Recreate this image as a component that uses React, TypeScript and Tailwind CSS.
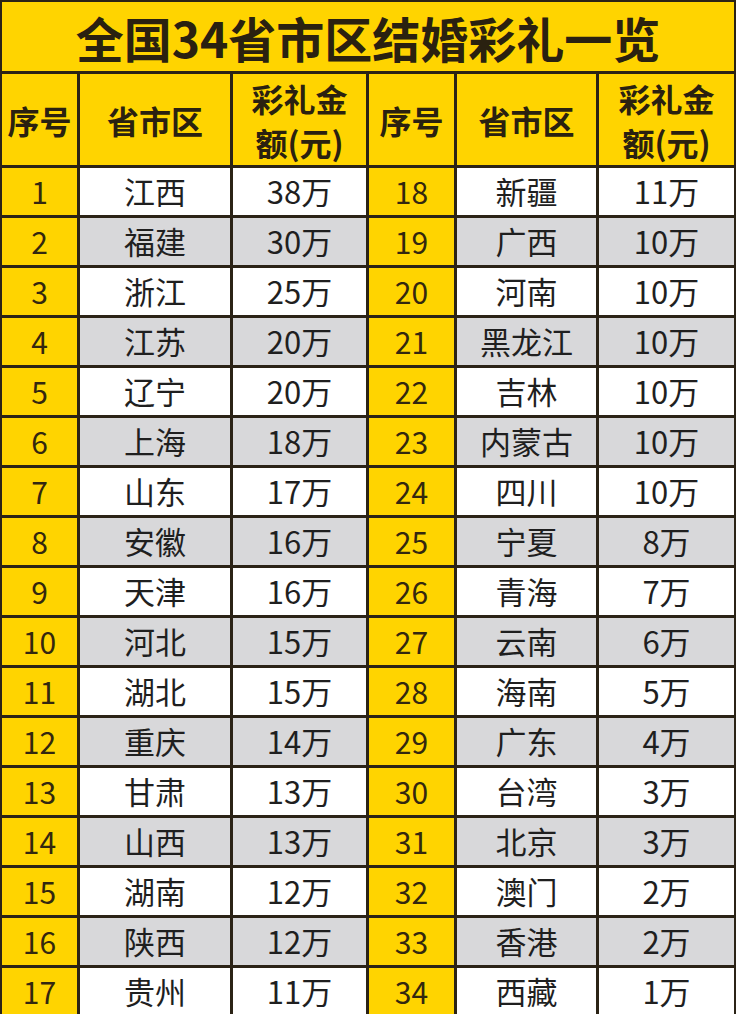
const left: [string, string][] = [
  ["江西", "38万"],
  ["福建", "30万"],
  ["浙江", "25万"],
  ["江苏", "20万"],
  ["辽宁", "20万"],
  ["上海", "18万"],
  ["山东", "17万"],
  ["安徽", "16万"],
  ["天津", "16万"],
  ["河北", "15万"],
  ["湖北", "15万"],
  ["重庆", "14万"],
  ["甘肃", "13万"],
  ["山西", "13万"],
  ["湖南", "12万"],
  ["陕西", "12万"],
  ["贵州", "11万"],
];

const right: [string, string][] = [
  ["新疆", "11万"],
  ["广西", "10万"],
  ["河南", "10万"],
  ["黑龙江", "10万"],
  ["吉林", "10万"],
  ["内蒙古", "10万"],
  ["四川", "10万"],
  ["宁夏", "8万"],
  ["青海", "7万"],
  ["云南", "6万"],
  ["海南", "5万"],
  ["广东", "4万"],
  ["台湾", "3万"],
  ["北京", "3万"],
  ["澳门", "2万"],
  ["香港", "2万"],
  ["西藏", "1万"],
];

function HeaderCells() {
  return (
    <>
      <div className="bg-[#ffd400] flex items-center justify-center text-[32px] font-bold text-[#2a2110]">
        序号
      </div>
      <div className="bg-[#ffd400] flex items-center justify-center text-[32px] font-bold text-[#2a2110]">
        省市区
      </div>
      <div className="bg-[#ffd400] flex items-center justify-center text-center text-[32px] leading-[44px] font-bold text-[#2a2110]">
        彩礼金
        <br />
        额(元)
      </div>
    </>
  );
}

function RowCells({ no, name, amount, shaded }: { no: number; name: string; amount: string; shaded: boolean }) {
  const shade = shaded ? "bg-[#d8d8da]" : "bg-white";
  return (
    <>
      <div className="bg-[#ffd400] flex items-center justify-center text-[30px] text-[#33270f]">
        {no}
      </div>
      <div className={`${shade} flex items-center justify-center text-[31px] text-[#1f1f1f]`}>
        {name}
      </div>
      <div className={`${shade} flex items-center justify-center text-[31px] text-[#1f1f1f]`}>
        {amount}
      </div>
    </>
  );
}

export default function App() {
  return (
    <div
      className="w-[736px] h-[1014px] overflow-hidden bg-white"
      style={{ fontFamily: '"Noto Sans CJK SC", "Noto Sans", sans-serif' }}
    >
      <div className="bg-[#2b2316] p-[2px] flex flex-col gap-[3px]">
        {/* title bar */}
        <div className="bg-[#ffd400] h-[69px] flex items-center justify-center text-[48px] font-bold text-[#2a2110]">
          全国34省市区结婚彩礼一览
        </div>

        {/* header */}
        <div className="grid grid-cols-[75px_150px_133px_85px_139px_1fr] h-[91px] gap-[3px]">
          <HeaderCells />
          <HeaderCells />
        </div>

        {/* rows */}
        <div className="grid grid-cols-[75px_150px_133px_85px_139px_1fr] auto-rows-[47px] gap-[3px]">
          {left.map((l, i) => {
            const r = right[i];
            const shaded = i % 2 === 1;
            return (
              <div key={i} className="contents">
                <RowCells no={i + 1} name={l[0]} amount={l[1]} shaded={shaded} />
                <RowCells no={i + 18} name={r[0]} amount={r[1]} shaded={shaded} />
              </div>
            );
          })}
        </div>
      </div>
    </div>
  );
}
